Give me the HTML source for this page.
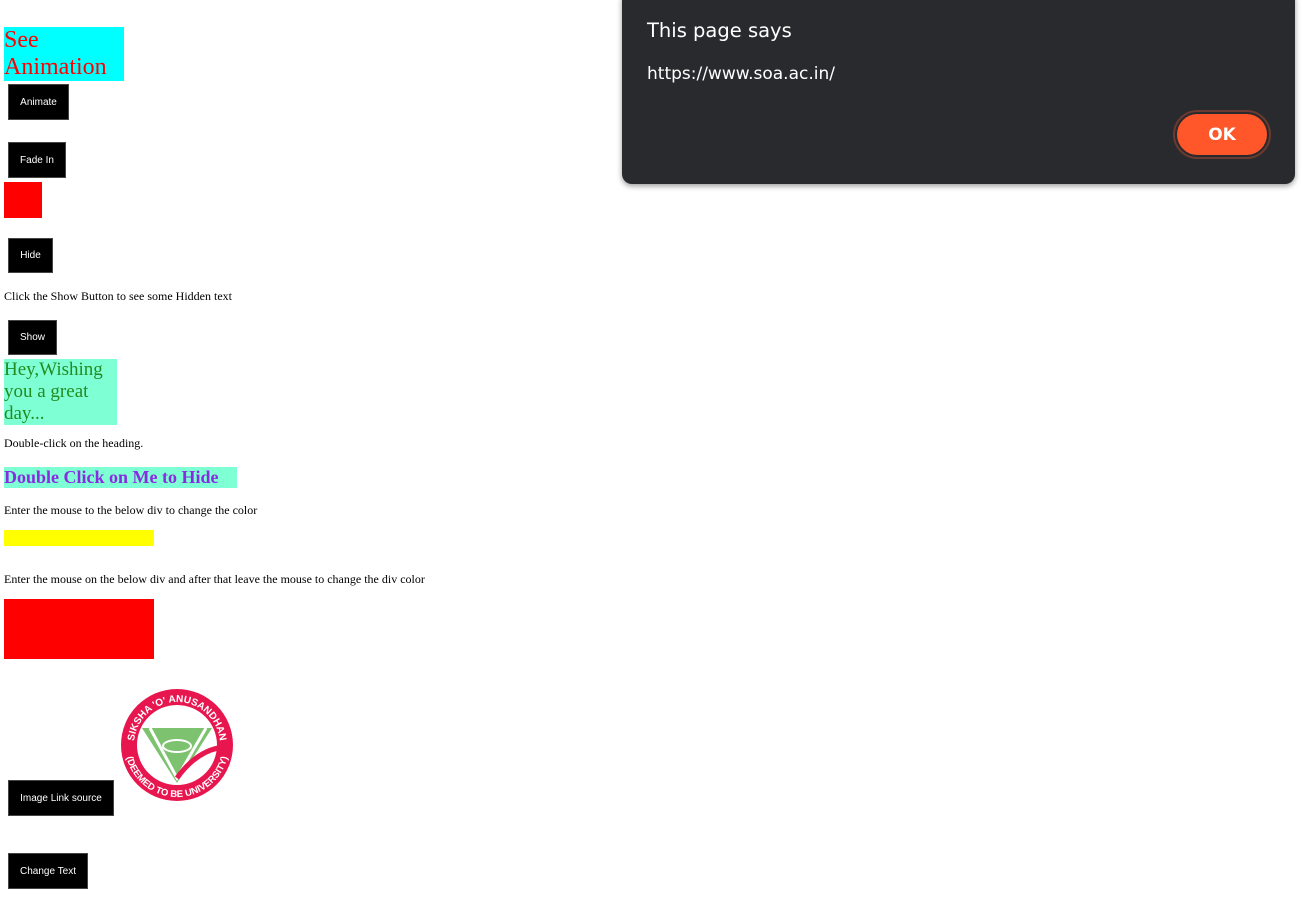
<!DOCTYPE html>
<html><head><meta charset="utf-8"><style>
body{margin:0;width:1303px;height:898px;background:#fff;position:relative;overflow:hidden;font-family:"Liberation Serif",serif;}
.a{position:absolute;}
.btn{position:absolute;background:#000;color:#fff;font:10px "Liberation Sans",sans-serif;display:flex;align-items:center;justify-content:center;box-sizing:border-box;border:1px solid #444;}
.t{position:absolute;left:4px;font-size:12px;color:#000;white-space:nowrap;}
</style></head><body>
<div class="a" style="left:4px;top:27px;width:120px;height:54px;background:#0ff;color:#f00;font-size:24px;line-height:27px;">See<br>Animation</div>
<div class="btn" style="left:8px;top:84px;width:61px;height:36px;">Animate</div>
<div class="btn" style="left:8px;top:142px;width:58px;height:36px;">Fade In</div>
<div class="a" style="left:4px;top:182px;width:38px;height:36px;background:#f00;"></div>
<div class="btn" style="left:8px;top:238px;width:45px;height:35px;">Hide</div>
<div class="t" style="top:289px;">Click the Show Button to see some Hidden text</div>
<div class="btn" style="left:8px;top:320px;width:49px;height:35px;">Show</div>
<div class="a" style="left:4px;top:359px;width:113px;height:66px;background:#7fffd4;color:#228b22;font-size:19px;line-height:22px;">Hey,Wishing<br>you a great<br>day...</div>
<div class="t" style="top:436px;">Double-click on the heading.</div>
<div class="a" style="left:4px;top:467px;width:233px;height:21px;background:#7fffd4;color:#8a2be2;font-weight:bold;font-size:18px;line-height:21px;">Double Click on Me to Hide</div>
<div class="t" style="top:503px;">Enter the mouse to the below div to change the color</div>
<div class="a" style="left:4px;top:530px;width:150px;height:16px;background:#ff0;"></div>
<div class="t" style="top:572px;">Enter the mouse on the below div and after that leave the mouse to change the div color</div>
<div class="a" style="left:4px;top:599px;width:150px;height:60px;background:#f00;"></div>
<svg class="a" style="left:120px;top:688px" width="114" height="114" viewBox="0 0 114 114">
<defs>
<path id="c1" d="M14,57 A43,43 0 0 1 100,57"/>
<path id="c2" d="M5,57 A52,52 0 0 0 109,57"/>
</defs>
<circle cx="57" cy="57" r="56" fill="#e8164f"/>
<circle cx="57" cy="57" r="40" fill="#fff"/>
<path d="M22,40 L92,40 L57,95 Z" fill="#7dc36f"/>
<path d="M30,40 L57,90 L86,40" fill="none" stroke="#fff" stroke-width="3"/>
<path d="M57,90 Q75,65 98,60" fill="none" stroke="#e8164f" stroke-width="5"/>
<ellipse cx="57" cy="58" rx="14" ry="6" fill="none" stroke="#fff" stroke-width="2"/>
<text font-family="Liberation Sans,sans-serif" font-size="10" font-weight="bold" fill="#fff"><textPath href="#c1" startOffset="50%" text-anchor="middle">SIKSHA 'O' ANUSANDHAN</textPath></text>
<text font-family="Liberation Sans,sans-serif" font-size="9.5" font-weight="bold" fill="#fff"><textPath href="#c2" startOffset="50%" text-anchor="middle">(DEEMED TO BE UNIVERSITY)</textPath></text>
</svg>
<div class="btn" style="left:8px;top:780px;width:106px;height:36px;">Image Link source</div>
<div class="btn" style="left:8px;top:853px;width:80px;height:36px;">Change Text</div>
<div class="a" style="left:622px;top:-10px;width:673px;height:194px;background:#292a2d;border-radius:10px;box-shadow:0 2px 6px rgba(0,0,0,.4);font-family:'DejaVu Sans','Liberation Sans',sans-serif;color:#fff;">
<div class="a" style="left:25px;top:29px;font-size:19.5px;">This page says</div>
<div class="a" style="left:25px;top:74px;font-size:17px;">https://www.soa.ac.in/</div>
<div class="a" style="left:551px;top:120px;width:98px;height:49px;border-radius:25px;border:2px solid #6b3a30;box-sizing:border-box;"></div>
<div class="a" style="left:555px;top:124px;width:90px;height:41px;border-radius:21px;background:#ff5729;font-weight:bold;font-size:17px;display:flex;align-items:center;justify-content:center;">OK</div>
</div>
</body></html>
